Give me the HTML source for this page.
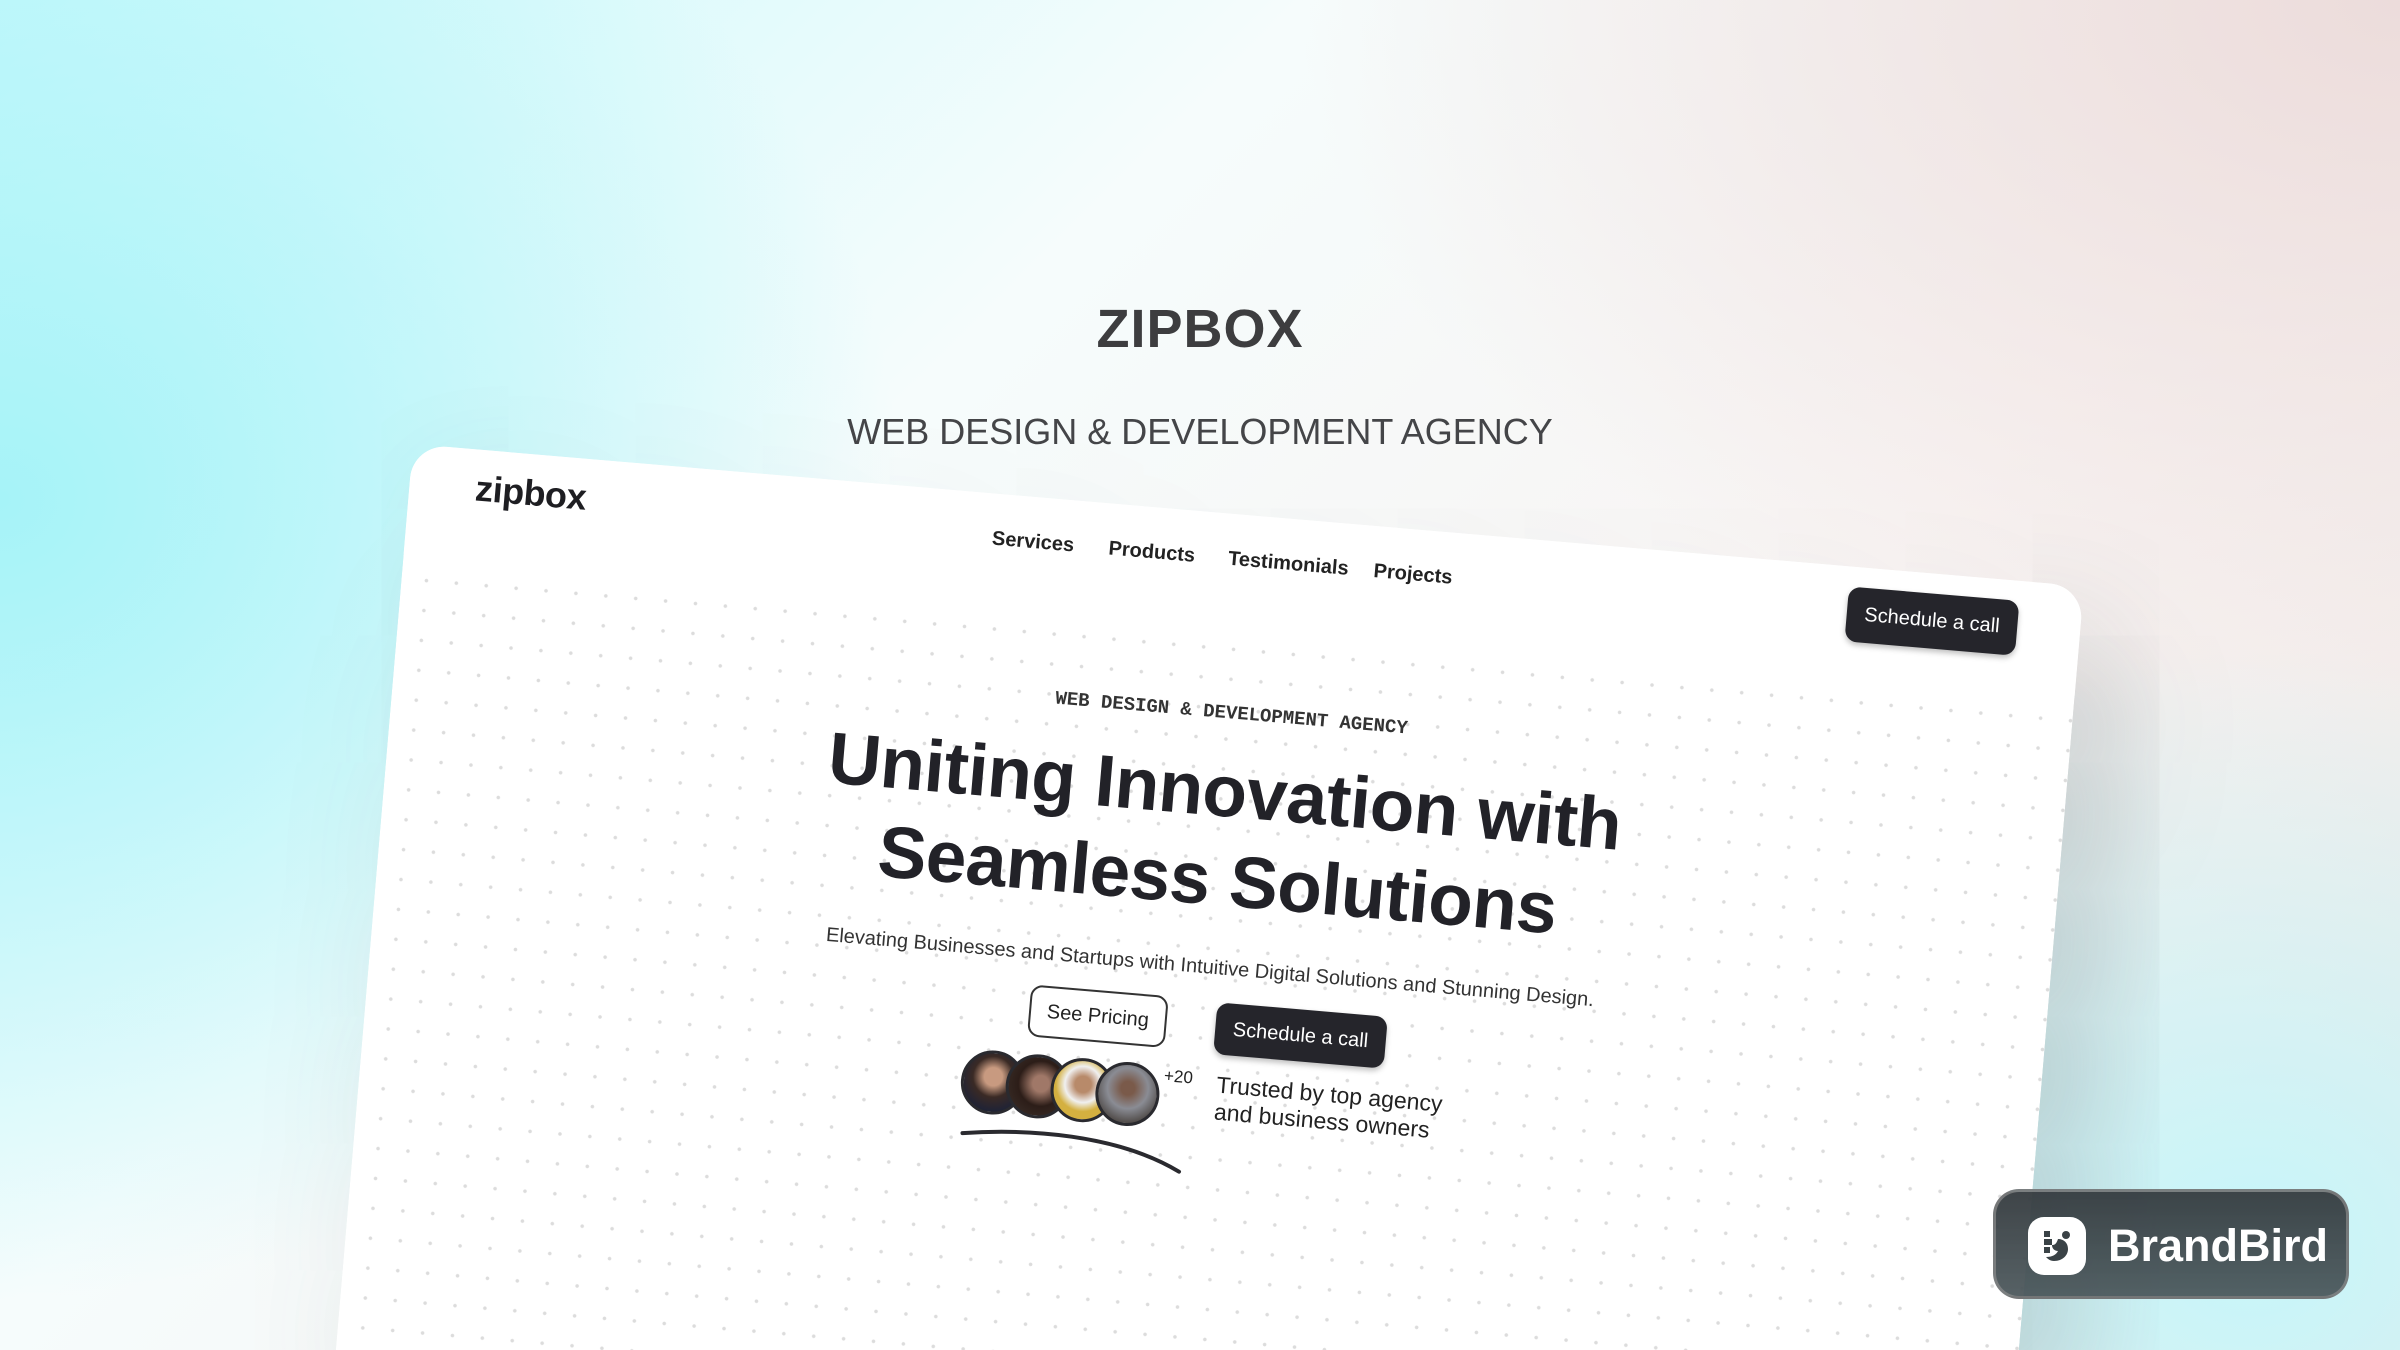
<!DOCTYPE html>
<html><head><meta charset="utf-8"><style>
html,body{margin:0;padding:0;width:2400px;height:1350px;overflow:hidden}
body{position:relative;font-family:"Liberation Sans",sans-serif}
#wrap{position:absolute;left:0;top:0;width:2400px;height:1350px;overflow:hidden;
background:
radial-gradient(ellipse 700px 600px at 2250px 1250px,#c6f6fa 0%,rgba(198,246,250,0) 100%),
radial-gradient(ellipse 900px 800px at 0px 500px,#a6f3f8 0%,rgba(166,243,248,0) 100%),
radial-gradient(ellipse 1100px 700px at 2400px 0px,#ecdcdb 0%,rgba(236,220,219,0) 100%),
linear-gradient(135deg,#c9f9fb 0%,#f6fcfc 35%,#f8f4f3 65%,#eee6e4 100%);}
.title{position:absolute;left:0;width:2400px;text-align:center;top:298px;font-size:54px;font-weight:700;color:#3d3d3f;letter-spacing:1px}
.sub{position:absolute;left:0;width:2400px;text-align:center;top:411px;font-size:36px;color:#444548}
.card{position:absolute;left:413px;top:444px;width:1677px;height:960px;background-color:#fff;border-radius:34px 34px 0 0;
transform-origin:0 0;transform:rotate(4.87deg);
box-shadow:40px 60px 140px rgba(60,80,85,.28);
background-image:radial-gradient(circle,#dcdcdc 1.6px,transparent 2px);background-size:30px 30px;background-position:10px 120px}
.card .top{position:absolute;left:0;top:0;width:100%;height:110px;background:#fff;border-radius:34px 34px 0 0}
.card *{position:absolute}
.logo{left:66px;top:18px;font-size:36px;font-weight:700;color:#1e1e22;letter-spacing:-.5px}
.nav{top:34px;font-size:20px;color:#222;font-weight:600}
.btn{background:#25252b;color:#fff;border-radius:12px;font-size:20px;text-align:center;box-shadow:0 3px 6px rgba(0,0,0,.25)}
.lab{left:0;width:1677px;text-align:center;top:188px;font-family:"Liberation Mono",monospace;font-size:19px;font-weight:700;color:#333}
.h{left:0;width:1677px;text-align:center;font-size:73px;font-weight:700;color:#222228;letter-spacing:-.5px}
.p{left:0;width:1677px;text-align:center;top:443px;font-size:20px;color:#333}
.av{width:58px;height:58px;border-radius:50%;border:3px solid #2a2a2f;top:555px}
</style></head><body><div id="wrap">
<div class="title">ZIPBOX</div>
<div class="sub">WEB DESIGN &amp; DEVELOPMENT AGENCY</div>
<div class="card">
<div class="top"></div>
<div class="logo">zipbox</div>
<div class="nav" style="left:585px">Services</div>
<div class="nav" style="left:702px">Products</div>
<div class="nav" style="left:822px">Testimonials</div>
<div class="nav" style="left:968px">Projects</div>
<div class="btn" style="left:1443px;top:20px;width:171px;height:55px;line-height:55px">Schedule a call</div>
<div class="lab">WEB DESIGN &amp; DEVELOPMENT AGENCY</div>
<div class="h" style="top:236px">Uniting Innovation with</div>
<div class="h" style="top:325px">Seamless Solutions</div>
<div class="p">Elevating Businesses and Startups with Intuitive Digital Solutions and Stunning Design.</div>
<div style="left:662px;top:486px;width:134px;height:48px;border:2px solid #333;border-radius:12px;line-height:48px;text-align:center;font-size:20px;color:#222;background:#fff">See Pricing</div>
<div class="btn" style="left:849px;top:488px;width:171px;height:52px;line-height:52px">Schedule a call</div>
<div class="av" style="left:600px;background:radial-gradient(circle at 50% 40%,#c89a80 20%,#3a2a25 45%,#1c2238 80%)"></div>
<div class="av" style="left:645px;background:radial-gradient(circle at 55% 45%,#a07868 18%,#2c1d18 50%,#3a2e28 90%)"></div>
<div class="av" style="left:690px;background:radial-gradient(circle at 50% 40%,#b88a6a 18%,#f0f0f0 40%,#d4b040 60%)"></div>
<div class="av" style="left:735px;background:radial-gradient(circle at 50% 40%,#7a5a4a 15%,#8a8c94 45%,#4a4440 80%)"></div>
<div style="left:802px;top:556px;font-size:17px;color:#222">+20</div>
<div style="left:855px;top:557px;font-size:23px;line-height:27px;color:#222">Trusted by top agency<br>and business owners</div>
<svg style="left:600px;top:620px" width="240" height="50" viewBox="0 0 240 50"><path d="M6 20 C70 10 160 8 225 40" fill="none" stroke="#2a2a2f" stroke-width="4" stroke-linecap="round"/></svg>
</div>
<div style="position:absolute;left:1993px;top:1189px;width:356px;height:110px;border-radius:26px;background:linear-gradient(180deg,rgba(52,58,62,.95),rgba(72,84,88,.92));border:3px solid rgba(140,140,140,.7);box-sizing:border-box">
<div style="position:absolute;left:32px;top:25px;width:58px;height:58px;background:#fff;border-radius:16px"></div>
<svg style="position:absolute;left:40px;top:33px" width="42" height="42" viewBox="0 0 42 42"><path d="M8 6h6v6h-6zM8 14h8v6h-8zM8 22h6v6h-6zM22 14c6 0 10 4 10 10s-5 12-14 12c-4 0-6-2-8-4c6 0 10-2 12-6c-3 0-6-2-6-6c2 0 4 0 6-6z" fill="#3a4246"/><circle cx="30" cy="10" r="4" fill="#3a4246"/></svg>
<div style="position:absolute;left:112px;top:28px;font-size:45px;font-weight:700;color:#fff">BrandBird</div>
</div>
</div></body></html>
